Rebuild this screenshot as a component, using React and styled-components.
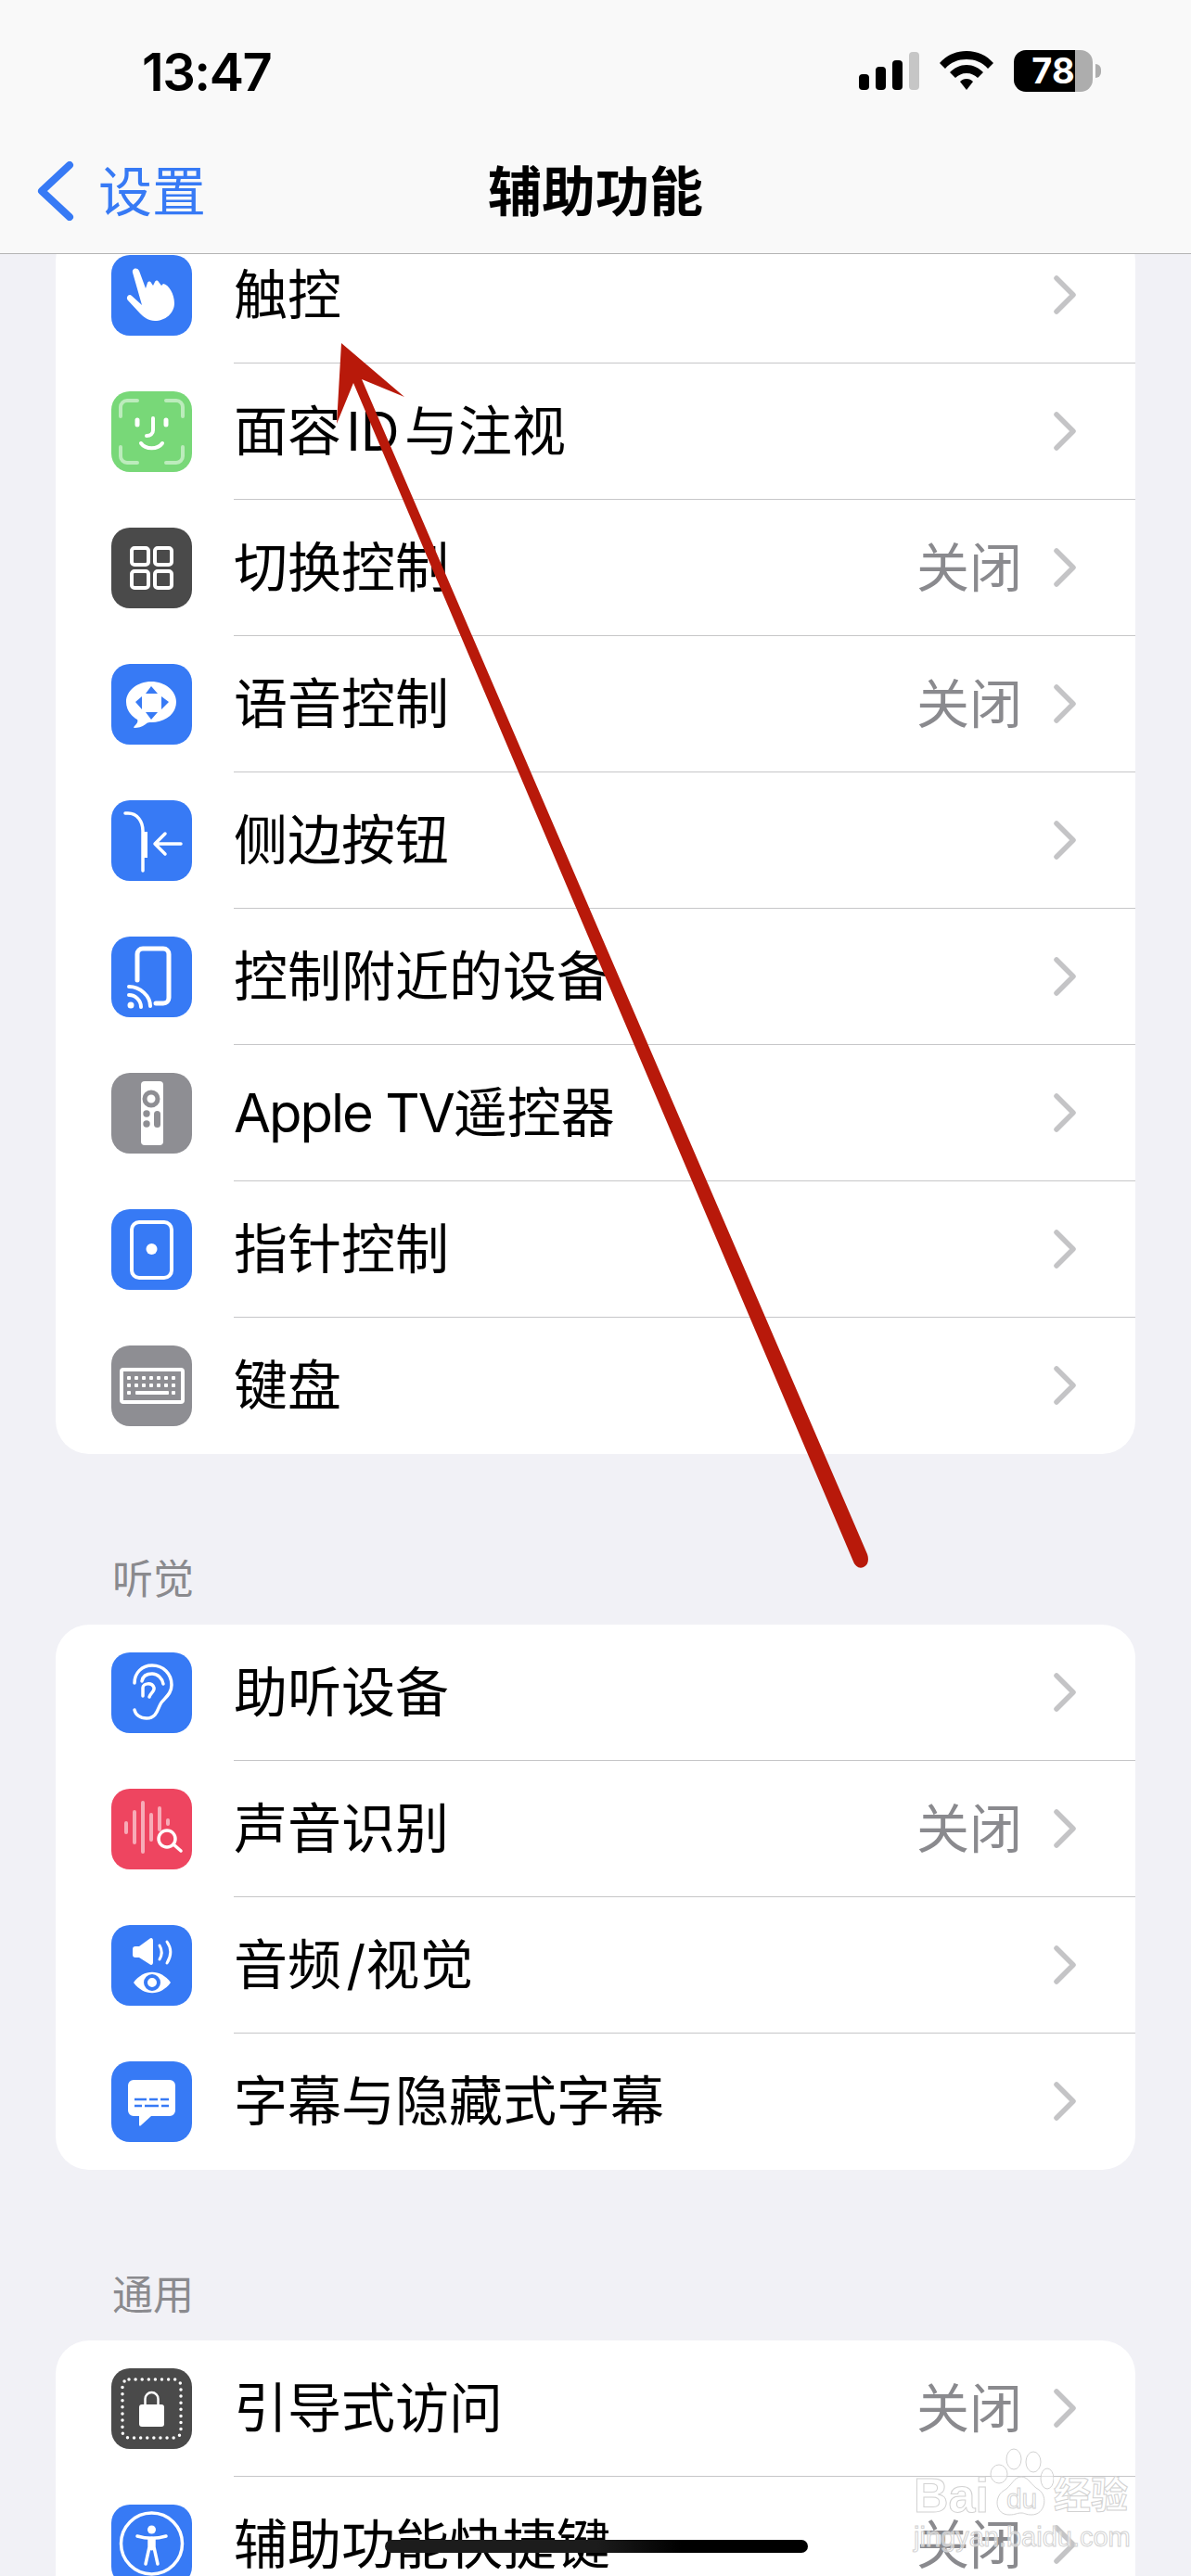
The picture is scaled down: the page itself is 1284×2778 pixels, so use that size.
import React from "react";
import styled, { createGlobalStyle } from "styled-components";

const BLUE = "#377af5";
const GRAY = "#8e8e93";
const DARK = "#4a4a4a";

const GlobalStyle = createGlobalStyle`
  html, body {
    margin: 0;
    background: #f1f1f6;
    font-family: "Inter", "Noto Sans CJK SC", sans-serif;
  }
`;

const Page = styled.div`
  position: relative;
  width: 1284px;
  height: 2778px;
  overflow: hidden;
  background: #f1f1f6;
`;
const Header = styled.header`
  position: relative;
  z-index: 2;
  height: 273px;
  background: #f9f9f9;
  border-bottom: 1px solid #b4b4b4;
`;
const StatusBar = styled.div`
  display: flex;
  align-items: center;
  justify-content: space-between;
  height: 152px;
  padding: 0 106px 0 153px;
  box-sizing: border-box;
`;
const Time = styled.div`
  padding-top: 3px;
  font-size: 56px;
  font-weight: 600;
  letter-spacing: -1.5px;
  color: #000;
  line-height: 56px;
`;
const StatusIcons = styled.div`
  display: flex;
  align-items: center;
  gap: 22px;
`;
const Battery = styled.div`
  position: relative;
  width: 85px;
  height: 45px;
  border-radius: 13px;
  background: linear-gradient(
    to right,
    #000 ${(p) => p.$level}%,
    #adadad ${(p) => p.$level}%
  );
  color: #fff;
  font-size: 38px;
  font-weight: 700;
  line-height: 45px;
  text-align: center;
  &::after {
    content: "";
    position: absolute;
    right: -9px;
    top: 15px;
    width: 6px;
    height: 15px;
    border-radius: 0 8px 8px 0;
    background: #adadad;
  }
`;
const NavBar = styled.nav`
  display: grid;
  grid-template-columns: 1fr auto 1fr;
  align-items: center;
  height: 121px;
  padding-bottom: 20px;
  box-sizing: border-box;
`;
const BackLink = styled.div`
  display: flex;
  align-items: center;
  gap: 26px;
  padding-left: 40px;
  color: ${BLUE};
  font-size: 58px;
  svg {
    margin-top: 6px;
  }
`;
const Title = styled.h1`
  margin: 0;
  font-size: 58px;
  font-weight: 700;
  color: #000;
`;
const Scroll = styled.main`
  margin-top: -29px;
`;
const Card = styled.section`
  margin: 0 60px;
  background: #fff;
  border-radius: 36px;
  overflow: hidden;
`;
const SectionLabel = styled.h2`
  height: 184px;
  margin: 0;
  padding: 0 0 27px 121px;
  box-sizing: border-box;
  display: flex;
  align-items: flex-end;
  font-size: 44px;
  line-height: 44px;
  font-weight: 400;
  color: #8a8a8e;
`;
const Row = styled.div`
  display: flex;
  align-items: center;
  height: 147px;
  padding-left: 60px;
`;
const IconTile = styled.div`
  flex: none;
  width: 87px;
  height: 87px;
  border-radius: 20px;
  background: ${(p) => p.$bg};
  svg {
    display: block;
  }
`;
const RowBody = styled.div`
  flex: 1;
  display: flex;
  align-items: center;
  height: 100%;
  margin-left: 45px;
  padding-right: 64px;
  border-bottom: 1px solid ${(p) => (p.$last ? "transparent" : "#c6c6c8")};
  box-sizing: border-box;
`;
const Label = styled.span`
  flex: 1;
  padding-bottom: 8px;
  font-size: 58px;
  color: #000;
  white-space: nowrap;
`;
const Latin = styled.span`
  letter-spacing: -2px;
`;
const Value = styled.span`
  margin-right: 34px;
  padding-bottom: 8px;
  font-size: 57px;
  color: #8a8a8e;
`;
const ArrowLayer = styled.svg`
  position: absolute;
  left: 0;
  top: 0;
  z-index: 3;
`;
const HomeBar = styled.div`
  position: absolute;
  z-index: 4;
  left: 415px;
  top: 2739px;
  width: 456px;
  height: 14px;
  border-radius: 7px;
  background: linear-gradient(to right, #1c1c1c, #1c1c1c 50%, #000 70%);
`;
const Watermark = styled.div`
  position: absolute;
  z-index: 5;
  left: 985px;
  top: 2638px;
  width: 232px;
  color: rgba(255, 255, 255, 0.55);
  -webkit-text-stroke: 1px #d2d2d2;
  font-family: "Liberation Sans", "Noto Sans CJK SC", sans-serif;
`;
const MarkTop = styled.div`
  display: flex;
  align-items: flex-end;
  height: 78px;
`;
const MarkWord = styled.span`
  font-size: ${(p) => p.$size}px;
  font-weight: 700;
  line-height: 50px;
  white-space: nowrap;
`;
const Paw = styled.div`
  position: relative;
  width: 70px;
  height: 78px;
  flex: none;
  svg {
    display: block;
  }
`;
const PawWord = styled.span`
  position: absolute;
  left: 19px;
  top: 42px;
  font-size: 30px;
  line-height: 30px;
  font-weight: 400;
`;
const MarkUrl = styled.div`
  margin-top: 5px;
  font-size: 29px;
  line-height: 30px;
  white-space: nowrap;
`;

const Glyph = ({ children }) => (
  <svg width="87" height="87" viewBox="0 0 87 87" fill="none">
    {children}
  </svg>
);

const HandIcon = () => (
  <Glyph>
    <path
      fill="#fff"
      d="M23 19C22 14 28 13 30 17L37 36L39 30C40 28 42 28 43 30L45 33L47 29C48 27 50 27 51 29L54 33L56 31C62 32 68 42 68 52C68 63 58 71 47 71C40 71 35 67 31 63L18 49C15 46 19 41 22 44L33 54Z"
    />
  </Glyph>
);

const FaceIcon = () => (
  <Glyph>
    <g stroke="#fff" strokeOpacity="0.5" strokeWidth="4" strokeLinecap="round">
      <path d="M10 27V17a7 7 0 0 1 7-7H28" />
      <path d="M59 10H70a7 7 0 0 1 7 7V27" />
      <path d="M10 60V70a7 7 0 0 0 7 7H28" />
      <path d="M59 77H70a7 7 0 0 0 7-7V60" />
    </g>
    <g stroke="#fff" strokeWidth="4" strokeLinecap="round">
      <path d="M28 31V36M59 31V36" strokeWidth="5" />
      <path d="M45 29V42C45 46 42 48 38 48" />
      <path d="M32 56C37 63 50 63 55 56" />
    </g>
  </Glyph>
);

const SwitchIcon = () => (
  <Glyph>
    <g stroke="#fff" strokeWidth="4">
      <rect x="22" y="22" width="18" height="18" rx="3" />
      <rect x="47" y="22" width="18" height="18" rx="3" />
      <rect x="22" y="47" width="18" height="18" rx="3" />
      <rect x="47" y="47" width="18" height="18" rx="3" />
    </g>
  </Glyph>
);

const VoiceIcon = () => (
  <Glyph>
    <path
      fill="#fff"
      d="M43 19C58 19 70 29 70 41C70 54 58 63 43 63C41 63 39 63 37 65C33 68 28 69 25 69C23 69 25 67 26 66C28 64 29 62 28 60C21 56 16 49 16 41C16 29 28 19 43 19Z"
    />
    <path
      fill={BLUE}
      d="M37 32L43 24L50 32ZM37 52H50L43 60ZM33 35V49L26 41ZM54 35L62 41L54 49Z"
    />
  </Glyph>
);

const SideButtonIcon = () => (
  <Glyph>
    <g stroke="#fff" strokeWidth="3.5" strokeLinecap="round" strokeLinejoin="round">
      <path d="M15 14H18C28 14 34 23 34 33V76" />
      <path d="M75 47H47M58 36L47 47L58 58" />
    </g>
    <rect x="34" y="34" width="5" height="28" fill="#fff" />
  </Glyph>
);

const NearbyIcon = () => (
  <Glyph>
    <g stroke="#fff" strokeLinecap="round">
      <path strokeWidth="5" d="M28 47V19a6 6 0 0 1 6-6H56a6 6 0 0 1 6 6V66a6 6 0 0 1-6 6H48" />
      <path strokeWidth="4" d="M19 54C31 54 42 64 42 75" />
      <path strokeWidth="4" d="M19 63C26 63 32 69 32 76" />
    </g>
    <circle cx="21" cy="74" r="3.5" fill="#fff" />
  </Glyph>
);

const RemoteIcon = () => (
  <Glyph>
    <rect x="32" y="9" width="24" height="69" rx="4" fill="#fff" />
    <circle cx="43" cy="28" r="7" stroke={GRAY} strokeWidth="5" />
    <circle cx="38" cy="44" r="3.7" fill={GRAY} />
    <circle cx="38" cy="55" r="3.7" fill={GRAY} />
    <rect x="46" y="41" width="7" height="18" rx="3.5" fill={GRAY} />
  </Glyph>
);

const PointerIcon = () => (
  <Glyph>
    <rect x="22" y="14" width="43" height="60" rx="8" stroke="#fff" strokeWidth="4" />
    <circle cx="43.5" cy="43" r="6" fill="#fff" />
  </Glyph>
);

const KeyboardIcon = () => {
  const xs = [19, 27, 35, 43, 51, 59, 67];
  return (
    <Glyph>
      <rect x="11" y="26" width="66" height="35" rx="2" stroke="#fff" strokeWidth="4" />
      {[35, 43].map((y) =>
        xs.map((x) => (
          <rect key={`${x}-${y}`} x={x - 2} y={y - 2} width="4" height="4" rx="1" fill="#fff" />
        ))
      )}
      <rect x="17" y="49" width="4" height="4" rx="1" fill="#fff" />
      <rect x="26" y="49" width="36" height="4" rx="1" fill="#fff" />
      <rect x="65" y="49" width="4" height="4" rx="1" fill="#fff" />
    </Glyph>
  );
};

const EarIcon = () => (
  <Glyph>
    <g stroke="#fff" strokeWidth="3.5" strokeLinecap="round" strokeLinejoin="round">
      <path d="M25 33C25 22 33 14 44 14C56 14 65 23 65 35C65 44 59 48 54 54C50 59 50 71 38 71C31 71 26 67 25 62" />
      <path d="M33 31C34 25 39 23 44 23C50 23 55 28 56 34" />
      <path d="M34 47V38C34 33 44 32 46 38C47 42 42 44 41 48" />
    </g>
  </Glyph>
);

const SoundIcon = () => (
  <Glyph>
    <g stroke="#fff" strokeOpacity="0.55" strokeWidth="4" strokeLinecap="round">
      <path d="M16 37V47M25 25V58M34 15V68M43 28V55M52 21V44M61 34V38" />
    </g>
    <g stroke="#fff" strokeWidth="3.5" strokeLinecap="round">
      <circle cx="60" cy="54" r="9" fill="#ee4560" />
      <path d="M67 60L75 67" />
    </g>
  </Glyph>
);

const AudioVisualIcon = () => (
  <Glyph>
    <path
      fill="#fff"
      d="M23 26a3 3 0 0 1 3-3H30L41 15C43 13 45 14 45 17V40C45 43 43 44 41 42L30 35H26a3 3 0 0 1-3-3Z"
    />
    <g stroke="#fff" strokeWidth="3" strokeLinecap="round">
      <path d="M52 22C55 27 55 32 52 37" />
      <path d="M60 18C65 25 65 33 60 41" />
    </g>
    <path fill="#fff" d="M24 62C35 47 53 47 64 62C53 77 35 77 24 62Z" />
    <circle cx="44" cy="62" r="7" fill="#fff" stroke={BLUE} strokeWidth="4" />
  </Glyph>
);

const CaptionIcon = () => (
  <Glyph>
    <path
      fill="#fff"
      d="M24 20H63a6 6 0 0 1 6 6V53a6 6 0 0 1-6 6H43L32 69C31 70 30 70 30 68V59H24a6 6 0 0 1-6-6V26a6 6 0 0 1 6-6Z"
    />
    <g stroke={BLUE} strokeWidth="2.5">
      <path d="M25 41H38M41 41H50M53 41H62" />
      <path d="M25 48H33M36 48H51M54 48H62" />
    </g>
  </Glyph>
);

const GuidedIcon = () => (
  <Glyph>
    <rect
      x="12"
      y="12"
      width="63"
      height="63"
      rx="7"
      stroke="#fff"
      strokeWidth="3.5"
      strokeLinecap="round"
      strokeDasharray="0 7.1"
    />
    <path d="M36.5 40V33a7 7 0 0 1 14 0V40" stroke="#fff" strokeWidth="2.5" />
    <rect x="30" y="39" width="27" height="24" rx="3" fill="#fff" />
  </Glyph>
);

const AccessIcon = () => (
  <Glyph>
    <circle cx="43.5" cy="42" r="33" stroke="#fff" strokeWidth="3.5" />
    <circle cx="43.5" cy="27" r="4.5" fill="#fff" />
    <g stroke="#fff" strokeLinecap="round" strokeLinejoin="round">
      <path strokeWidth="3.5" d="M28 34C38 37 49 37 59 34" />
      <path strokeWidth="3.5" d="M37 64L41 46V37M50 64L46 46V37" />
      <path strokeWidth="5" d="M43.5 37V47" />
    </g>
  </Glyph>
);

const Chevron = () => (
  <svg width="24" height="42" viewBox="0 0 24 42" fill="none">
    <path
      d="M3 3L21 21L3 39"
      stroke="#c4c4c6"
      strokeWidth="5.5"
      strokeLinecap="round"
      strokeLinejoin="round"
    />
  </svg>
);

const groups = [
  {
    rows: [
      { label: "触控", bg: BLUE, icon: <HandIcon /> },
      { label: "面容\u200aID\u200a与注视", bg: "#78d878", icon: <FaceIcon /> },
      { label: "切换控制", value: "关闭", bg: DARK, icon: <SwitchIcon /> },
      { label: "语音控制", value: "关闭", bg: BLUE, icon: <VoiceIcon /> },
      { label: "侧边按钮", bg: BLUE, icon: <SideButtonIcon /> },
      { label: "控制附近的设备", bg: BLUE, icon: <NearbyIcon /> },
      {
        label: (
          <>
            <Latin>Apple TV</Latin>遥控器
          </>
        ),
        bg: GRAY,
        icon: <RemoteIcon />,
      },
      { label: "指针控制", bg: BLUE, icon: <PointerIcon /> },
      { label: "键盘", bg: GRAY, icon: <KeyboardIcon /> },
    ],
  },
  {
    title: "听觉",
    rows: [
      { label: "助听设备", bg: BLUE, icon: <EarIcon /> },
      { label: "声音识别", value: "关闭", bg: "#ee4560", icon: <SoundIcon /> },
      { label: "音频\u200a/视觉", bg: BLUE, icon: <AudioVisualIcon /> },
      { label: "字幕与隐藏式字幕", bg: BLUE, icon: <CaptionIcon /> },
    ],
  },
  {
    title: "通用",
    rows: [
      { label: "引导式访问", value: "关闭", bg: DARK, icon: <GuidedIcon /> },
      { label: "辅助功能快捷键", value: "关闭", bg: BLUE, icon: <AccessIcon /> },
    ],
  },
];

export default function App() {
  return (
    <Page>
      <GlobalStyle />
      <Header>
        <StatusBar>
          <Time>13:47</Time>
          <StatusIcons>
            <svg width="65" height="41" viewBox="0 0 65 41">
              <rect x="0" y="24" width="11" height="17" rx="4" fill="#000" />
              <rect x="18" y="16" width="11" height="25" rx="4" fill="#000" />
              <rect x="36" y="9" width="11" height="32" rx="4" fill="#000" />
              <rect x="54" y="0" width="11" height="41" rx="4" fill="#c6c6c6" />
            </svg>
            <svg width="58" height="42" viewBox="0 0 58 42" fill="#000">
              <path d="M29 0C41 0 51 5 58 13L52 19C46 12 38 9 29 9C20 9 12 12 6 19L0 13C7 5 17 0 29 0Z" />
              <path d="M29 15C36 15 42 18 47 23L41 29C38 26 34 24 29 24C24 24 20 26 17 29L11 23C16 18 22 15 29 15Z" />
              <path d="M29 30C32 30 34 31 36 33L29 42L22 33C24 31 26 30 29 30Z" />
            </svg>
            <Battery $level={78}>78</Battery>
          </StatusIcons>
        </StatusBar>
        <NavBar>
          <BackLink>
            <svg width="40" height="64" viewBox="0 0 40 64" fill="none">
              <path
                d="M35 4L5 32L35 60"
                stroke={BLUE}
                strokeWidth="8"
                strokeLinecap="round"
                strokeLinejoin="round"
              />
            </svg>
            设置
          </BackLink>
          <Title>辅助功能</Title>
        </NavBar>
      </Header>
      <Scroll>
        {groups.map((group, i) => (
          <div key={i}>
            {group.title && <SectionLabel>{group.title}</SectionLabel>}
            <Card>
              {group.rows.map((row, j) => (
                <Row key={j}>
                  <IconTile $bg={row.bg}>{row.icon}</IconTile>
                  <RowBody $last={j === group.rows.length - 1}>
                    <Label>{row.label}</Label>
                    {row.value && <Value>{row.value}</Value>}
                    <Chevron />
                  </RowBody>
                </Row>
              ))}
            </Card>
          </div>
        ))}
      </Scroll>
      <ArrowLayer width="1284" height="2778" viewBox="0 0 1284 2778">
        <path
          fill="#b8190a"
          d="M368 370L436 428L390 409L935 1676C937 1682 936 1688 931 1690C926 1692 922 1689 920 1684L381 413L363 457Z"
        />
      </ArrowLayer>
      <HomeBar />
      <Watermark>
        <MarkTop>
          <MarkWord $size={52}>Bai</MarkWord>
          <Paw>
            <svg width="70" height="78" viewBox="0 0 70 78" fill="rgba(255,255,255,0.45)" stroke="#d2d2d2">
              <ellipse cx="27" cy="14" rx="8" ry="11" />
              <ellipse cx="48" cy="17" rx="8" ry="11" />
              <ellipse cx="11" cy="30" rx="9" ry="10" />
              <ellipse cx="63" cy="35" rx="7" ry="11" />
              <path d="M35 33C43 33 45 42 54 47C64 54 61 74 46 74C40 74 39 72 35 72C30 72 29 74 22 74C7 74 5 55 16 48C25 43 27 33 35 33Z" />
            </svg>
            <PawWord>du</PawWord>
          </Paw>
          <MarkWord $size={40}>经验</MarkWord>
        </MarkTop>
        <MarkUrl>jingyan.baidu.com</MarkUrl>
      </Watermark>
    </Page>
  );
}
